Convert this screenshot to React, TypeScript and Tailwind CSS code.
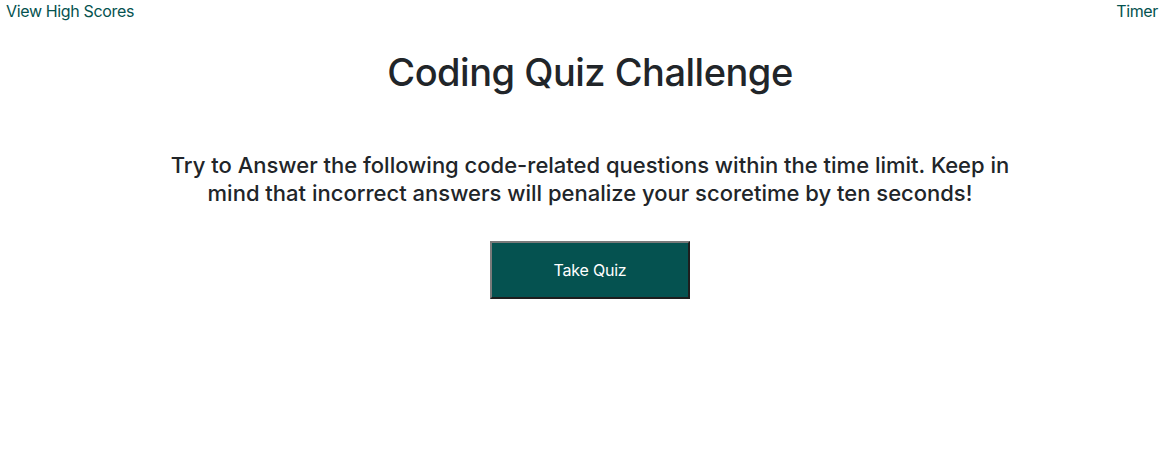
export default function App() {
  return (
    <div className="min-h-[460px] bg-white text-[#212529] font-['Inter','Noto_Sans',sans-serif]">
      <header className="flex items-start justify-between px-[6px] pt-[1px] text-[16px] leading-[20px] tracking-[-0.35px] text-[#05524f]">
        <a href="#" className="hover:underline">View High Scores</a>
        <span className="pr-[1px]">Timer</span>
      </header>

      <main className="flex flex-col items-center pl-[15px] text-center">
        <h1 className="mt-[27px] text-[38px] font-medium leading-[48px] tracking-[-0.5px]">
          Coding Quiz Challenge
        </h1>
        <p className="mt-[55px] w-[860px] text-[22px] font-medium leading-[28px]">
          Try to Answer the following code-related questions within the time limit. Keep in mind
          that incorrect answers will penalize your scoretime by ten seconds!
        </p>
        <button
          type="button"
          className="mt-[34px] h-[58px] w-[200px] border-2 border-t-[#7a7a7a] border-l-[#7a7a7a] border-r-[#1e1e1e] border-b-[#1e1e1e] bg-[#055250] text-[16px] font-normal tracking-[-0.2px] text-white"
        >
          Take Quiz
        </button>
      </main>
    </div>
  )
}
